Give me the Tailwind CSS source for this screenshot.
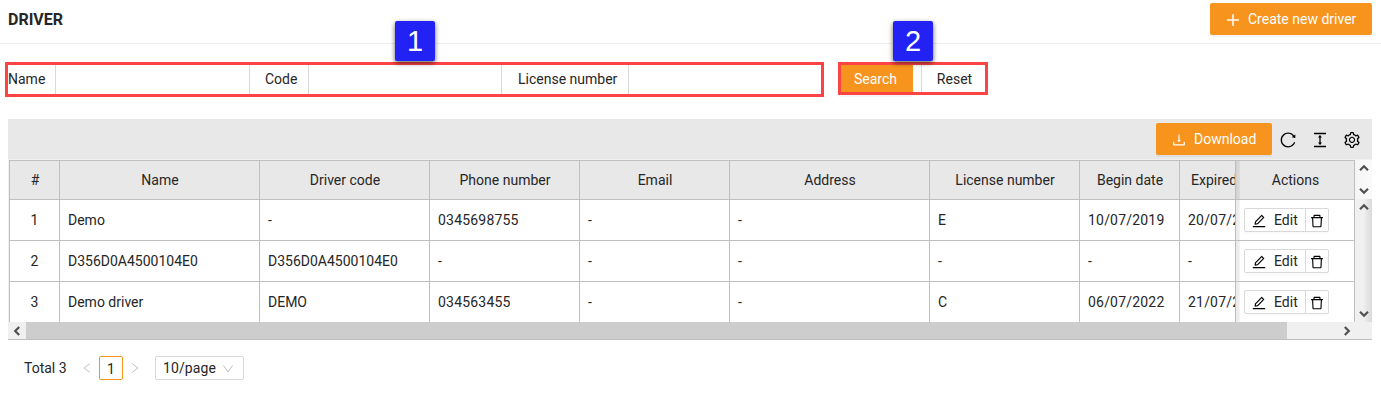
<!DOCTYPE html>
<html lang="en">
<head>
<meta charset="utf-8">
<title>Driver</title>
<script src="https://cdn.jsdelivr.net/npm/@tailwindcss/browser@4"></script>
</head>
<body class="relative h-[406px] w-[1381px] overflow-hidden bg-white font-['Roboto',sans-serif] text-[14px] leading-[22px] text-[#262626]">
<svg class="hidden">
  <symbol id="plus" viewBox="64 64 896 896"><path d="M474 152h76v322h326v76H550v322h-76V550H148v-76h326z" stroke="currentColor" stroke-width="30"/></symbol>
  <symbol id="download" viewBox="64 64 896 896"><path d="M505.7 661a8 8 0 0 0 12.6 0l112-141.7c4.1-5.2.4-12.9-6.3-12.9h-74.1V168c0-4.4-3.6-8-8-8h-60c-4.4 0-8 3.6-8 8v338.3H400c-6.7 0-10.4 7.7-6.3 12.9l112 141.8zM878 626h-60c-4.4 0-8 3.6-8 8v154H214V634c0-4.4-3.6-8-8-8h-60c-4.4 0-8 3.6-8 8v198c0 17.7 14.3 32 32 32h684c17.7 0 32-14.3 32-32V634c0-4.4-3.6-8-8-8z"/></symbol>
  <symbol id="reload" viewBox="64 64 896 896"><path d="M909.1 209.3l-56.4 44.1C775.8 155.1 656.2 92 521.9 92 290 92 102.3 279.5 102 511.5 101.7 743.7 289.8 932 521.9 932c181.3 0 335.8-115 394.6-276.1 1.5-4.2-.7-8.9-4.9-10.3l-56.7-19.5a8 8 0 0 0-10.1 4.8c-1.8 5-3.8 10-5.9 14.9-17.3 41-42.1 77.8-73.7 109.4A344.77 344.77 0 0 1 655.9 829c-42.3 17.9-87.4 27-133.8 27-46.5 0-91.5-9.1-133.8-27A341.5 341.5 0 0 1 279 755.2a342.16 342.16 0 0 1-73.7-109.4c-17.9-42.4-27-87.4-27-133.9s9.1-91.5 27-133.9c17.3-41 42.1-77.8 73.7-109.4 31.6-31.6 68.4-56.4 109.3-73.8 42.3-17.9 87.4-27 133.8-27 46.5 0 91.5 9.1 133.8 27a341.5 341.5 0 0 1 109.3 73.8c9.9 9.9 19.2 20.4 27.8 31.4l-60.2 47a8 8 0 0 0 3 14.1l175.6 43c5 1.2 9.9-2.6 9.9-7.7l.8-180.9c-.1-6.6-7.8-10.3-13-6.2z"/></symbol>
  <symbol id="height" viewBox="64 64 896 896"><path d="M840 836H184c-4.4 0-8 3.6-8 8v60c0 4.4 3.6 8 8 8h656c4.4 0 8-3.6 8-8v-60c0-4.4-3.6-8-8-8zm0-724H184c-4.4 0-8 3.6-8 8v60c0 4.4 3.6 8 8 8h656c4.4 0 8-3.6 8-8v-60c0-4.4-3.6-8-8-8zM610.8 378c6 0 9.4-7 5.7-11.7L515.7 238.7a7.14 7.14 0 0 0-11.3 0L403.6 366.3a7.23 7.23 0 0 0 5.7 11.7H476v268h-62.8c-6 0-9.4 7-5.7 11.7l100.8 127.5c2.9 3.7 8.5 3.7 11.3 0l100.8-127.5c3.7-4.7.4-11.7-5.7-11.7H548V378h62.8z"/></symbol>
  <symbol id="setting" viewBox="64 64 896 896"><path d="M924.8 625.7l-65.5-56c3.1-19 4.7-38.4 4.7-57.8s-1.6-38.8-4.7-57.8l65.5-56a32.03 32.03 0 0 0 9.3-35.2l-.9-2.6a443.74 443.74 0 0 0-79.7-137.9l-1.8-2.1a32.12 32.12 0 0 0-35.1-9.5l-81.3 28.9c-30-24.6-63.5-44-99.7-57.6l-15.7-85a32.05 32.05 0 0 0-25.8-25.7l-2.7-.5c-52.1-9.4-106.9-9.4-159 0l-2.7.5a32.05 32.05 0 0 0-25.8 25.7l-15.8 85.4a351.86 351.86 0 0 0-99 57.4l-81.9-29.1a32 32 0 0 0-35.1 9.5l-1.8 2.1a446.02 446.02 0 0 0-79.7 137.9l-.9 2.6c-4.5 12.5-.8 26.5 9.3 35.2l66.3 56.6c-3.1 18.8-4.6 38-4.6 57.1 0 19.2 1.5 38.4 4.6 57.1L99 625.5a32.03 32.03 0 0 0-9.3 35.2l.9 2.6c18.1 50.4 44.9 96.9 79.7 137.9l1.8 2.1a32.12 32.12 0 0 0 35.1 9.5l81.9-29.1c29.8 24.5 63.1 43.9 99 57.4l15.8 85.4a32.05 32.05 0 0 0 25.8 25.7l2.7.5a449.4 449.4 0 0 0 159 0l2.7-.5a32.05 32.05 0 0 0 25.8-25.7l15.7-85a350 350 0 0 0 99.7-57.6l81.3 28.9a32 32 0 0 0 35.1-9.5l1.8-2.1c34.8-41.1 61.6-87.5 79.7-137.9l.9-2.6c4.5-12.3.8-26.3-9.3-35zM788.3 465.9c2.5 15.1 3.8 30.6 3.8 46.1s-1.3 31-3.8 46.1l-6.6 40.1 74.7 63.9a370.03 370.03 0 0 1-42.6 73.6L721 702.8l-31.4 25.8c-23.9 19.6-50.5 35-79.3 45.8l-38.1 14.3-17.9 97a377.5 377.5 0 0 1-85 0l-17.9-97.2-37.8-14.5c-28.5-10.8-55-26.2-78.7-45.7l-31.4-25.9-93.4 33.2c-17-22.9-31.2-47.6-42.6-73.6l75.5-64.5-6.5-40c-2.4-14.9-3.7-30.3-3.7-45.5 0-15.3 1.2-30.6 3.7-45.5l6.5-40-75.5-64.5c11.3-26.1 25.6-50.7 42.6-73.6l93.4 33.2 31.4-25.9c23.7-19.5 50.2-34.9 78.7-45.7l37.9-14.3 17.9-97.2c28.1-3.2 56.8-3.2 85 0l17.9 97 38.1 14.3c28.7 10.8 55.4 26.2 79.3 45.8l31.4 25.8 92.8-32.9c17 22.9 31.2 47.6 42.6 73.6L781.8 426l6.5 39.9zM512 326c-97.2 0-176 78.8-176 176s78.8 176 176 176 176-78.8 176-176-78.8-176-176-176zm79.2 255.2A111.6 111.6 0 0 1 512 614c-29.9 0-58-11.7-79.2-32.8A111.6 111.6 0 0 1 400 502c0-29.9 11.7-58 32.8-79.2C454 401.6 482.1 390 512 390c29.9 0 58 11.6 79.2 32.8A111.6 111.6 0 0 1 624 502c0 29.9-11.7 58-32.8 79.2z"/></symbol>
  <symbol id="edit" viewBox="64 64 896 896"><path d="M257.7 752c2 0 4-.2 6-.5L431.9 722c2-.4 3.9-1.3 5.3-2.8l423.9-423.9a9.96 9.96 0 0 0 0-14.1L694.9 114.9c-1.9-1.9-4.4-2.9-7.1-2.9s-5.2 1-7.1 2.9L256.8 538.8c-1.5 1.5-2.4 3.3-2.8 5.3l-29.5 168.2a33.5 33.5 0 0 0 9.4 29.8c6.6 6.4 14.9 9.9 23.8 9.9zm67.4-174.4L687.8 215l73.3 73.3-362.7 362.6-88.9 15.7 15.6-89zM880 836H144c-17.7 0-32 14.3-32 32v36c0 4.4 3.6 8 8 8h784c4.4 0 8-3.6 8-8v-36c0-17.7-14.3-32-32-32z"/></symbol>
  <symbol id="trash" viewBox="64 64 896 896"><path d="M360 184h-8c4.4 0 8-3.6 8-8v8h304v-8c0 4.4 3.6 8 8 8h-8v72h72v-80c0-35.3-28.7-64-64-64H352c-35.3 0-64 28.7-64 64v80h72v-72zm504 72H160c-17.7 0-32 14.3-32 32v32c0 4.4 3.6 8 8 8h60.4l24.7 523c1.6 34.1 29.8 61 63.9 61h454c34.2 0 62.3-26.8 63.9-61l24.7-523H888c4.4 0 8-3.6 8-8v-32c0-17.7-14.3-32-32-32zM731.3 840H292.7l-24.2-512h487l-24.2 512z"/></symbol>
  <symbol id="chev" viewBox="0 0 10 10"><path d="M1 7.2 5 3.2 9 7.2" fill="none" stroke="#505050" stroke-width="2.2"/></symbol>
</svg>

<header class="flex h-11 items-start justify-between border-b border-[#eeeeee] pl-2 pr-[9px] pt-[3px]">
  <h1 class="mt-[6px] text-[16px] font-bold">DRIVER</h1>
  <button class="flex h-8 w-[162px] items-center gap-2 rounded-[2px] bg-[#f7941d] pl-4 text-white shadow-[0_2px_0_rgba(0,0,0,0.04)]"><svg class="mt-px size-[14px] fill-current"><use href="#plus"/></svg><span class="whitespace-nowrap">Create new driver</span></button>
</header>

<form class="mt-[19px] flex h-8 items-center pl-2">
  <label class="w-[47px]">Name</label><div class="h-8 w-[195px] border border-[#d9d9d9]"></div>
  <label class="ml-[15px] w-[43px]">Code</label><div class="h-8 w-[194px] border border-[#d9d9d9]"></div>
  <label class="ml-4 w-[110px] whitespace-nowrap">License number</label><div class="h-8 w-[194px] border border-[#d9d9d9]"></div>
  <button type="button" class="ml-4 h-8 w-[75px] rounded-[2px] bg-[#f7941d] text-white shadow-[0_2px_0_rgba(0,0,0,0.04)]">Search</button>
  <button type="button" class="ml-2 h-8 w-[67px] border border-[#d9d9d9]">Reset</button>
</form>

<main class="mx-2 mt-6 w-[1364px]">
  <div class="flex h-10 items-center justify-end bg-[#e8e8e8] pr-3">
    <button class="mr-2 flex h-8 w-[116px] items-center gap-2 rounded-[2px] bg-[#f7941d] pl-4 text-white shadow-[0_2px_0_rgba(0,0,0,0.04)]"><svg class="mt-px size-[14px] fill-current"><use href="#download"/></svg>Download</button>
    <div class="flex gap-4"><svg class="mt-px size-4"><use href="#reload"/></svg><svg class="mt-px size-4"><use href="#height"/></svg><svg class="mt-px size-4"><use href="#setting"/></svg></div>
  </div>
  <div class="flex h-[163px] border-l border-t border-[#f0f0f0]">
    <div id="grid" class="w-[1346px] shrink-0 border-t border-[#bfbfbf]"></div>
    <div class="w-[17px] shrink-0">
      <div class="flex h-[39px] flex-col items-center justify-between bg-linear-to-r from-[#f5f5f5] to-[#fafafa] pb-[3px] pt-[3px]"><svg class="size-[10px]"><use href="#chev"/></svg><svg class="size-[10px] rotate-180"><use href="#chev"/></svg></div>
      <div class="flex h-[123px] flex-col items-center justify-between bg-linear-to-r from-[#f0f0f0] from-50% to-[#d9d9d9] pb-[3px] pt-[3px]"><svg class="size-[10px]"><use href="#chev"/></svg><svg class="size-[10px] rotate-180"><use href="#chev"/></svg></div>
    </div>
  </div>
  <div class="flex h-[18px] items-center border-b border-[#bfbfbf] bg-[#f0f0f0]">
    <div class="flex w-[18px] justify-center"><svg class="size-[10px] -rotate-90"><use href="#chev"/></svg></div>
    <div class="h-[17px] w-[1261px] bg-[#cdcdcd]"></div>
    <div class="ml-[55px]"><svg class="size-[10px] rotate-90"><use href="#chev"/></svg></div>
  </div>
</main>

<footer class="mt-4 flex h-6 items-center pl-6">
  <span class="w-[56px]">Total 3</span>
  <svg class="ml-px size-3 fill-none stroke-[#c0c0c0]" viewBox="0 0 12 12"><path d="M9 1.5 3 6l6 4.5"/></svg>
  <span class="ml-[6px] flex h-6 w-6 items-center justify-center rounded-[2px] border border-[#f7941d] pt-px">1</span>
  <svg class="ml-[6px] size-3 fill-none stroke-[#c0c0c0]" viewBox="0 0 12 12"><path d="M3 1.5 9 6l-6 4.5"/></svg>
  <span class="ml-[14px] flex h-6 w-[89px] items-center rounded-[2px] border border-[#d9d9d9] pl-[7px] tracking-[0.1px]">10/page<svg class="ml-[6px] mt-px size-3 fill-none stroke-[#c0c0c0]" viewBox="0 0 12 12"><path d="M1.5 2.5 6 9l4.5-6.5"/></svg></span>
</footer>

<!-- callout overlays -->
<div class="absolute left-[5px] top-[62px] h-[35px] w-[819px] border-3 border-[#fc4444]"></div>
<div class="absolute left-[838px] top-[62px] h-[33px] w-[150px] border-3 border-[#fc4444]"></div>
<div class="absolute left-[395px] top-[21px] flex size-10 items-center justify-center rounded-[2px] bg-[#2222f4] font-['Liberation_Sans',sans-serif] text-[29px] text-white shadow-[0_2px_5px_rgba(0,0,0,0.6)]">1</div>
<div class="absolute left-[893px] top-[21px] flex size-10 items-center justify-center rounded-[2px] bg-[#2222f4] font-['Liberation_Sans',sans-serif] text-[29px] text-white shadow-[0_2px_5px_rgba(0,0,0,0.6)]">2</div>

<script>
const rowGrid = 'grid grid-cols-[50px_200px_170px_150px_150px_200px_150px_100px_56px_120px] border-[#bfbfbf]';
const head = ['#','Name','Driver code','Phone number','Email','Address','License number','Begin date','Expired'];
const rows = [
  ['1','Demo','-','0345698755','-','-','E','10/07/2019','20/07/2022'],
  ['2','D356D0A4500104E0','D356D0A4500104E0','-','-','-','-','-','-'],
  ['3','Demo driver','DEMO','034563455','-','-','C','06/07/2022','21/07/2022']
];
let html = `<div class="${rowGrid} h-[39px] border-b bg-[#e8e8e8]">` +
  head.map((t, i) => `<div class="flex items-center overflow-hidden whitespace-nowrap border-l border-[#bfbfbf] ${i === 8 ? 'pl-[11px]' : 'justify-center pl-px'}">${t}</div>`).join('') +
  `<div class="flex border-x border-[#bfbfbf]"><div class="w-1 bg-linear-to-r from-[#d0d0d0] to-[#dedede]"></div><div class="flex flex-1 items-center justify-center pr-[3px]">Actions</div></div></div>`;
rows.forEach((r, n) => {
  html += `<div class="${rowGrid} ${n < 2 ? 'h-[41px] border-b' : 'h-10'}">` +
    r.map((t, i) => `<div class="flex items-center overflow-hidden whitespace-nowrap border-l border-[#bfbfbf] ${i === 0 ? 'justify-center' : 'pl-2'} ${i === 3 || i > 6 ? 'tracking-[0.2px]' : ''}">${t}</div>`).join('') +
    `<div class="flex items-center border-x border-[#bfbfbf]"><div class="h-full w-1 bg-linear-to-r from-[#e8e8e8] to-[#f4f4f4]"></div>
      <div class="ml-1 flex h-6 w-[85px] rounded-[2px] border border-[#d9d9d9] shadow-[0_2px_0_rgba(0,0,0,0.016)]">
        <div class="flex w-[61px] items-center gap-2 border-r border-[#d9d9d9] pl-[7px]"><svg class="mt-px size-[14px]"><use href="#edit"/></svg>Edit</div>
        <div class="flex flex-1 items-center justify-center"><svg class="mt-px size-[14px]"><use href="#trash"/></svg></div>
      </div></div></div>`;
});
document.getElementById('grid').innerHTML = html;
</script>
</body>
</html>
